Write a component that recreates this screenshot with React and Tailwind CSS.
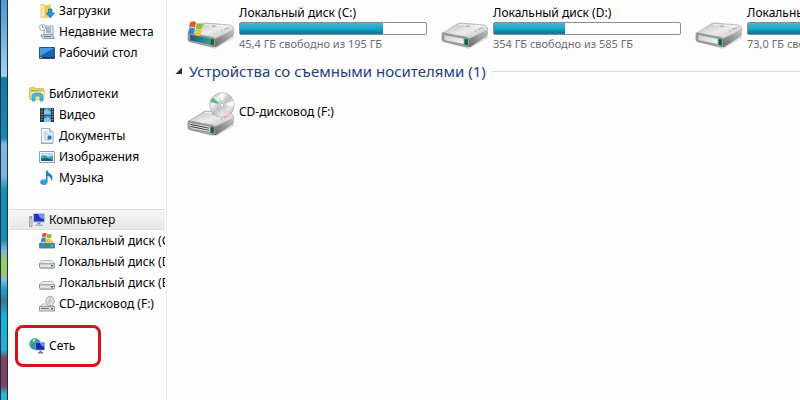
const FOLDERS = [
  { name: "Загрузки", icon: DownloadsIcon },
  { name: "Недавние места", icon: RecentIcon },
  { name: "Рабочий стол", icon: DesktopIcon },
];

const LIBRARIES = [
  { name: "Видео", icon: VideoIcon },
  { name: "Документы", icon: DocumentIcon },
  { name: "Изображения", icon: PictureIcon },
  { name: "Музыка", icon: MusicIcon },
];

const DRIVES = [
  { name: "Локальный диск (C:)", icon: SmallSystemDrive },
  { name: "Локальный диск (D:)", icon: SmallDrive },
  { name: "Локальный диск (E:)", icon: SmallDrive },
  { name: "CD-дисковод (F:)", icon: SmallCdDrive },
];

const DISKS = [
  { name: "Локальный диск (C:)", info: "45,4 ГБ свободно из 195 ГБ", used: 77, system: true },
  { name: "Локальный диск (D:)", info: "354 ГБ свободно из 585 ГБ", used: 38 },
  { name: "Локальный диск (E:)", info: "73,0 ГБ свободно из 151 ГБ", used: 52 },
];

// ---------- small icons (16px) ----------

function Icon({ children }) {
  return (
    <svg className="h-4 w-4 shrink-0" viewBox="0 0 16 16" aria-hidden="true">
      {children}
    </svg>
  );
}

function DownloadsIcon() {
  return (
    <Icon>
      <path d="M2 1l5 1 5-1v13l-5 1-5-1z" fill="#f0d269" />
      <path d="M2 1l4 2v12l-4-1z" fill="#fbe9a2" stroke="#d9b344" strokeWidth=".6" />
      <path d="M7 3h5v10H7z" fill="#e8c452" />
      <path d="M9.500 6h3.500v4h2.500l-4.200 5-4.200-5h2.400z" fill="#2d93d8" stroke="#1a6cac" strokeWidth=".6" />
    </Icon>
  );
}

function RecentIcon() {
  return (
    <Icon>
      <path d="M5 2h9v9H5z" fill="#e3eef5" stroke="#8198a8" strokeWidth=".8" />
      <path d="M7 4h5M7 6h5M7 8h5" stroke="#4f86a4" />
      <path d="M2 11l11-1 2.500 4.500H4z" fill="#c4d3dc" stroke="#76909f" strokeWidth=".8" />
      <path d="M5 12.500h7" stroke="#55829a" />
      <circle cx="3.500" cy="3.500" r="3" fill="#eff4f7" stroke="#8e9fae" strokeWidth=".8" />
      <path d="M3.500 1.500v2h1.500" fill="none" stroke="#536a80" strokeWidth=".7" />
    </Icon>
  );
}

function DesktopIcon() {
  return (
    <Icon>
      <path d="M.5 2.500h15v11H.5z" fill="#1c62b4" stroke="#31506c" />
      <path d="M1 3h14L1 11z" fill="#4b9be2" />
      <path d="M1 12h14v1H1z" fill="#17365c" />
      <path d="M1 12h2v1H1z" fill="#6fd0a0" />
    </Icon>
  );
}

function LibraryIcon() {
  return (
    <Icon>
      <path d="M.5 2l5-1 1 1.500h8v11h-14z" fill="#ecd06a" stroke="#c9a53c" strokeWidth=".6" />
      <path d="M2 4h11v2H2z" fill="#79b95c" />
      <path d="M1 5.500l14.500-1-.5 9H1.500z" fill="#f8e598" stroke="#d6b850" strokeWidth=".5" />
      <path d="M3 15V10.500C3 8 5 7 8.500 7S14 8 14 10.500V15h-3v-3.500c0-1-1-1.500-2.500-1.500S6 10.500 6 11.500V15z" fill="#48b9df" stroke="#238bb4" strokeWidth=".6" />
    </Icon>
  );
}

function VideoIcon() {
  return (
    <Icon>
      <path d="M1 1h14v14H1z" fill="#25343f" />
      <path d="M5 1h7v6.500H5zM5 8.500h7V15H5z" fill="#3a94cc" />
      <path d="M5 4l3-2 4 4v1.500H5zM5 12l4-2 3 3v2H5z" fill="#83c8ea" />
      <path d="M3 1.500v13M13.500 1.500v13" stroke="#9fb0bb" strokeWidth="1.200" strokeDasharray="1.300 1.300" />
    </Icon>
  );
}

function DocumentIcon() {
  return (
    <Icon>
      <path d="M2.500.5h8l3.500 3.500v11.500H2.500z" fill="#f9fcfe" stroke="#8299aa" strokeWidth=".8" />
      <path d="M10.500.5V4H14" fill="#cfdee9" stroke="#8299aa" strokeWidth=".7" />
      <path d="M4.500 4h4M4.500 6h7M4.500 8h3M4.500 10h3M4.500 12h7" stroke="#8cb2ce" strokeWidth=".9" />
      <path d="M8.500 7.500h4v4h-4z" fill="#2c79b7" />
      <path d="M3 14h10.500v1H3z" fill="#b8d2e4" />
    </Icon>
  );
}

function PictureIcon() {
  return (
    <Icon>
      <path d="M.5 2.500h15v11H.5z" fill="#fff" stroke="#8ca0ae" />
      <path d="M2 4h12v8H2z" fill="#a4dcf0" />
      <path d="M2 8l3-2 4 2 5-1v5H2z" fill="#3a9db2" />
      <path d="M2 10l5-1 7 2v1H2z" fill="#156478" />
      <path d="M4 5h5v1H4z" fill="#f3fcff" />
    </Icon>
  );
}

function MusicIcon() {
  return (
    <Icon>
      <ellipse cx="4.800" cy="12" rx="3.600" ry="2.900" fill="#2a9ddd" />
      <path d="M7 .5h1.500c.5 3 5.500 3.500 5 7.500-.2 1.500-1 2.300-1.700 3 .7-3-.8-4.500-3.300-5V12H7z" fill="#1a86cb" />
      <path d="M2.500 11c1-1.500 2.500-1.500 3.500-1" fill="none" stroke="#8ed5f5" />
    </Icon>
  );
}

function ComputerIcon() {
  return (
    <Icon>
      <path d="M.5 4.500h2.500v10H.5z" fill="#d4dbe2" stroke="#77848f" strokeWidth=".7" />
      <path d="M1.200 6h1.300" stroke="#5a6772" />
      <path d="M4.500 1.500h11v8.500h-11z" fill="#1d36bd" stroke="#b7c3d4" />
      <path d="M9 2h6v5c-3 0-5-2-6-5z" fill="#6f96f2" />
      <path d="M8.500 10.500h3v2h-3z" fill="#8794a4" />
      <path d="M6 12.500h8V14H6z" fill="#aab6c2" />
    </Icon>
  );
}

function NetworkIcon() {
  return (
    <Icon>
      <circle cx="6" cy="6" r="5.700" fill="#2b8fc4" />
      <path d="M2 2.500c2-2 4-2.300 6-1.500L6.500 4 4 5 2 8 .5 6zM5 7l3-1 1 3-3 3z" fill="#46b55c" />
      <path d="M4 2l2-1 .5 1.500L4 4z" fill="#c4f1da" />
      <path d="M6.500 4.500h9v7.500h-9z" fill="#152bb8" stroke="#9eabc8" strokeWidth=".6" />
      <path d="M11 5h4v4c-2-.5-3.500-2-4-4z" fill="#688bec" />
      <path d="M10.500 12.500h2V14h-2zM9 14h5v1.500H9z" fill="#6f7d90" />
    </Icon>
  );
}

function SmallDrive() {
  return (
    <Icon>
      <path d="M3 6.500h10l2.500 2.500v3.500q0 1.500-1.500 1.500H2q-1.500 0-1.500-1.500V9z" fill="#eceeee" stroke="#9a9e9f" strokeWidth=".7" />
      <path d="M.5 9.800h15v2.700q0 1.500-1.500 1.500H2q-1.500 0-1.500-1.500z" fill="#e3e5e5" stroke="#777c7d" strokeWidth=".8" />
      <path d="M12 11h2v1.500h-2z" fill="#258d43" />
    </Icon>
  );
}

function SmallSystemDrive() {
  return (
    <Icon>
      <path d="M3 8h10l2.500 3H.5z" fill="#b9cfd0" stroke="#8fa5a8" strokeWidth=".6" />
      <path d="M.5 10.500h15V15H.5z" fill="#388d9c" stroke="#4d7f88" strokeWidth=".8" />
      <path d="M12 12h2v1.500h-2z" fill="#5fd07c" />
      <g transform="translate(2 -.5) scale(.72)">
        <Flag />
      </g>
    </Icon>
  );
}

function SmallCdDrive() {
  return (
    <Icon>
      <path d="M3 8h10l2.500 3H.5z" fill="#e3e5e5" stroke="#a5a9aa" strokeWidth=".6" />
      <path d="M.5 10.500h15V15H.5z" fill="#dcdfdf" stroke="#7d8384" strokeWidth=".8" />
      <path d="M2 12.500h8" stroke="#6b7071" />
      <path d="M12 12h2v1.500h-2z" fill="#258d43" />
      <ellipse cx="11" cy="5" rx="4.200" ry="4.700" fill="#e0e3e5" stroke="#94989c" strokeWidth=".8" />
      <path d="M11 .5v3M9 8l1.500-2.500" stroke="#a9b2b8" />
      <circle cx="11" cy="5" r="1.200" fill="#fff" stroke="#85898c" strokeWidth=".6" />
    </Icon>
  );
}

// ---------- large drives ----------

function Flag() {
  return (
    <>
      <path d="M2 1.500c2-1.500 4-1.500 6-.2L7 7C5 5.700 3 5.800 1 7z" fill="#e8592b" />
      <path d="M8.700 1.700c2 1.200 4 1.200 6.300 0l-1 5.600c-2 1.300-4 1.200-6.200.1z" fill="#86bd3c" />
      <path d="M.9 7.800c2-1.300 4-1.200 6-.1l-1 5.600c-2-1.200-4-1.200-6 0z" fill="#3584cf" />
      <path d="M7.600 8.200c2 1.200 4 1.200 6.200 0l-1 5.500c-2 1.300-4 1.300-6.200.1z" fill="#f7c62f" />
    </>
  );
}

function DriveGradients() {
  return (
    <svg className="absolute h-0 w-0" aria-hidden="true">
      <defs>
        <linearGradient id="driveTop" x1="0" y1="0" x2="1" y2="1">
          <stop offset="0" stopColor="#b4b5b6" />
          <stop offset=".5" stopColor="#ececec" />
          <stop offset="1" stopColor="#b4b5b6" />
        </linearGradient>
        <linearGradient id="driveSide" x1="0" y1="1" x2="1" y2="0">
          <stop offset="0" stopColor="#686b6c" />
          <stop offset="1" stopColor="#c2c3c3" />
        </linearGradient>
        <linearGradient id="driveFront" x1="0" y1="0" x2="1" y2="1">
          <stop offset="0" stopColor="#c8cbcd" />
          <stop offset="1" stopColor="#fbfbfb" />
        </linearGradient>
        <linearGradient id="driveTeal" x1="0" y1="0" x2="1" y2="0">
          <stop offset="0" stopColor="#175b79" />
          <stop offset="1" stopColor="#2b9da0" />
        </linearGradient>
        <linearGradient id="discFace" x1="0" y1="0" x2="1" y2="1">
          <stop offset="0" stopColor="#b0b3b6" />
          <stop offset=".3" stopColor="#f0f0f0" />
          <stop offset=".5" stopColor="#c2bfc5" />
          <stop offset=".7" stopColor="#ece8e8" />
          <stop offset="1" stopColor="#9fa1a4" />
        </linearGradient>
      </defs>
    </svg>
  );
}

function DriveBody({ front = "url(#driveFront)" }) {
  return (
    <>
      <path d="M3 21l24 5 19-11 1 2-19 11z" fill="#000" opacity=".12" />
      <path d="M17 2.500Q18 2 20 2l23 2q2 .3 3 2l1 3-19 9.500L1 12.500z" fill="url(#driveTop)" stroke="#9a9c9d" strokeWidth=".6" />
      <path d="M27.500 18L47 8.500v4.500q0 1.500-1.200 2.300L30 25.500q-1.500.8-3 .5z" fill="url(#driveSide)" />
      <path d="M1 12.500Q1.300 11.800 3 12l23 4.500q2 .4 2 2V24q0 2.200-2 1.900L3 20.800q-2-.4-2-2z" fill="#a5a8aa" stroke="#77797b" strokeWidth=".6" />
      <path d="M3 13.500l20 4v5.800L3 19.500z" fill={front} stroke="#6e7173" strokeWidth=".5" />
      <path d="M23.500 17.500l3.500.5v6.800l-3.500-.7z" fill="#1f7a3c" />
      <path d="M25 19v4" stroke="#0c3820" />
      <path d="M25 4.500l4-.5 1 .8-4 1z" fill="#65696c" />
      <path d="M37 8.500l5-2M34 10.500l1.500-.7" stroke="#979a9c" strokeWidth=".8" />
      <path d="M18 3.500l24 2" stroke="#fafafa" strokeWidth=".8" />
    </>
  );
}

function DriveIcon({ system }) {
  return (
    <svg className="h-7 w-12 shrink-0" viewBox="0 0 48 28" aria-hidden="true">
      <DriveBody front={system ? "url(#driveTeal)" : undefined} />
      {system && (
        <g transform="translate(1 0)">
          <Flag />
        </g>
      )}
    </svg>
  );
}

function CdDriveIcon() {
  return (
    <svg className="h-11 w-12 shrink-0" viewBox="0 0 48 44" aria-hidden="true">
      <g transform="translate(0 17)">
        <DriveBody />
        <path d="M4 15.500l18 3.700M4 17.500l18 3.800" stroke="#3c3f41" strokeWidth="1" />
      </g>
      <circle cx="35" cy="13" r="12.300" fill="url(#discFace)" stroke="#9a9c9e" strokeWidth=".6" />
      <path d="M35 13L23.500 10q.6-2.500 2-4.500z" fill="#57c278" />
      <path d="M35 13L33 1.200q3-.6 5 .2z" fill="#fff" opacity=".8" />
      <path d="M35 13l3.500 11.500q3-.9 4.600-2.600z" fill="#e9cfe2" />
      <path d="M35 13l11.500-4q.7 2.500.4 5z" fill="#fff" opacity=".8" />
      <circle cx="35" cy="13" r="4" fill="#d6d7d9" stroke="#b2b4b7" strokeWidth=".6" />
      <circle cx="35" cy="13" r="1.800" fill="#fff" stroke="#999ca0" strokeWidth=".6" />
    </svg>
  );
}

// ---------- navigation pane ----------

function NavItem({ icon: ItemIcon, name, root, selected }) {
  return (
    <li>
      <a
        href="#"
        aria-current={selected ? "page" : undefined}
        className={`flex h-[21px] items-center gap-1 whitespace-nowrap ${root ? "pl-5" : "pl-[30px]"} ${
          selected ? "border-y border-[#dedede] bg-gradient-to-b from-[#f6f6f6] to-[#e8e8e8]" : ""
        }`}
      >
        <ItemIcon />
        <span>{name}</span>
      </a>
    </li>
  );
}

function NavPane() {
  return (
    <nav className="mr-px w-[156px] shrink-0 overflow-hidden">
      <ul>
        {FOLDERS.map((item) => (
          <NavItem key={item.name} {...item} />
        ))}
      </ul>
      <ul className="mt-5">
        <NavItem icon={LibraryIcon} name="Библиотеки" root />
        {LIBRARIES.map((item) => (
          <NavItem key={item.name} {...item} />
        ))}
      </ul>
      <ul className="mt-[21px]">
        <NavItem icon={ComputerIcon} name="Компьютер" root selected />
        {DRIVES.map((item) => (
          <NavItem key={item.name} {...item} />
        ))}
      </ul>
      <ul className="relative mt-[21px]">
        <NavItem icon={NetworkIcon} name="Сеть" root />
        {/* highlight frame around the network entry */}
        <li aria-hidden="true" className="absolute -top-2.5 left-1.5 h-[42px] w-[86px] rounded-lg border-3 border-[#d3141c]" />
      </ul>
    </nav>
  );
}

// ---------- content ----------

function DiskTile({ name, info, used, system }) {
  return (
    <a href="#" className="flex w-[254px] shrink-0 gap-1 pr-3.5">
      <span className="pt-4">
        <DriveIcon system={system} />
      </span>
      <span className="flex min-w-0 grow flex-col whitespace-nowrap">
        <span className="leading-4">{name}</span>
        <span className="mt-px h-[13px] rounded-xs border border-[#8c8c8c] bg-white">
          <span
            className="block h-full bg-gradient-to-b from-[#3fb9d2] via-[#16a9c9] to-[#0f6f90]"
            style={{ width: `${used}%` }}
          />
        </span>
        <span className="mt-px text-[11px] leading-4 text-[#6d6d6d]">{info}</span>
      </span>
    </a>
  );
}

export default function App() {
  return (
    <div className="flex h-screen overflow-hidden bg-[#fdfdfd] font-['Noto_Sans','Open_Sans',sans-serif] text-[12px] text-black">
      <DriveGradients />
      {/* desktop strip seen past the window frame */}
      <div className="w-2 shrink-0 border-x border-l-[#0c3550] border-r-[#12384d] bg-[linear-gradient(to_bottom,#4e97cb_0,#a9cfeb_76px,#0c7aa8_78px,#1689b0_138px,#86b5dc_144px,#82b3d9_176px,#168fae_190px,#1790b4_240px,#82b0d8_250px,#9dcb62_260px,#9dcb62_273px,#8ab8df_280px,#12a2c4_290px,#48748f_302px,#18b0d4_314px,#1fb4d6_350px,#87405e_358px,#87405e_386px,#2eb6da_394px)]" />
      <div className="flex min-w-0 grow pl-px">
        <NavPane />
        <main className="min-w-0 grow overflow-hidden border-l border-[#e9ecf0]">
          <div className="flex pt-[5px] pl-5">
            {DISKS.map((disk) => (
              <DiskTile key={disk.name} {...disk} />
            ))}
          </div>
          <section>
            <h2 className="mt-2 flex h-[22px] items-center gap-1.5 pl-2 text-[15px] whitespace-nowrap text-[#233f7d]">
              <svg className="h-2 w-2 shrink-0" viewBox="0 0 8 8" aria-hidden="true">
                <path d="M7 .5V7H.5z" fill="#2c2c2c" />
              </svg>
              Устройства со съемными носителями (1)
              <span className="h-px grow bg-[#dcdcdc]" />
            </h2>
            <a href="#" className="mt-2.5 ml-5 flex w-[254px] items-center gap-1">
              <CdDriveIcon />
              <span className="pb-1">CD-дисковод (F:)</span>
            </a>
          </section>
        </main>
      </div>
    </div>
  );
}
